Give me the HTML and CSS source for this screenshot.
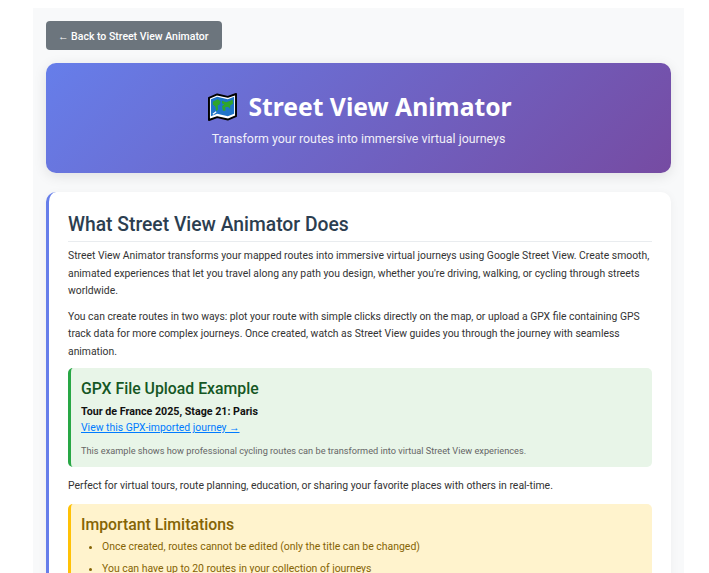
FILE: index.html
```html
<!DOCTYPE html>
<html lang="en">
<head>
<meta charset="utf-8">
<title>Street View Animator</title>
<link rel="stylesheet" href="styles.css">
</head>
<body>
<div class="container">
  <a class="back" href="#">← Back to Street View Animator</a>
  <header class="hero">
    <h1 class="hero-title">
      <svg class="map-icon" viewBox="0 0 30 29" aria-hidden="true">
        <path d="M1 5 L9.5 1.5 L20.5 4 L29 1 V24 L20.5 27.5 L9.5 25 L1 28 Z" fill="#fff" stroke="#000" stroke-width="2" stroke-linejoin="round"/>
        <path d="M3 6.5 L9.5 4 L20.5 6.5 L27 4 V21.5 L20.5 24 L9.5 21.5 L3 24 Z" fill="#1f74c9"/>
        <path d="M5 9 L10 6.5 L13 8.5 L12 12 L10 13 L10.5 17 L8.5 19 L7.5 14 L5 12 Z M14.5 8 L19 9.5 L25.5 7 L26 11 L23 13 L23 16.5 L21 14.5 L18 14.5 L18 18.5 L15.5 18.5 L14.5 13.5 L17 12 L14.5 11 Z" fill="#2fa52c"/>
        <path d="M5 22 L8.5 19.5" stroke="#fff" stroke-width="1.2"/>
      </svg>
      <span>Street View Animator</span>
    </h1>
    <p class="hero-sub">Transform your routes into immersive virtual journeys</p>
  </header>
  <section class="card">
    <h2 class="card-title">What Street View Animator Does</h2>
    <p class="text">Street View Animator transforms your mapped routes into immersive virtual journeys using Google Street View. Create smooth, animated experiences that let you travel along any path you design, whether you're driving, walking, or cycling through streets worldwide.</p>
    <p class="text">You can create routes in two ways: plot your route with simple clicks directly on the map, or upload a GPX file containing GPS track data for more complex journeys. Once created, watch as Street View guides you through the journey with seamless animation.</p>
    <div class="note note-green">
      <h3 class="note-title">GPX File Upload Example</h3>
      <p class="example-name">Tour de France 2025, Stage 21: Paris</p>
      <a class="example-link" href="#">View this GPX-imported journey →</a>
      <p class="example-note">This example shows how professional cycling routes can be transformed into virtual Street View experiences.</p>
    </div>
    <p class="text text-after-note">Perfect for virtual tours, route planning, education, or sharing your favorite places with others in real-time.</p>
    <div class="note note-yellow">
      <h3 class="note-title">Important Limitations</h3>
      <ul class="limits">
        <li>Once created, routes cannot be edited (only the title can be changed)</li>
        <li>You can have up to 20 routes in your collection of journeys</li>
      </ul>
    </div>
  </section>
</div>
</body>
</html>
```
FILE: styles.css
```css
* { box-sizing: border-box; }
html { overflow: hidden; height: 573px; }
body {
  margin: 8px 0 0;
  background: #fff;
  font-family: Roboto, "Noto Sans", sans-serif;
  color: #333;
}
.container {
  width: 651px;
  margin: 0 0 0 33px;
  padding: 13px;
  background: #f8f9fa;
}
.back {
  display: inline-block;
  height: 29px;
  padding: 1px 13.5px 0 12px;
  line-height: 29px;
  background: #6c757d;
  color: #fff;
  font-size: 10.5px;
  font-weight: 500;
  text-decoration: none;
  border-radius: 4px;
  vertical-align: top;
}
.hero {
  margin-top: 13px;
  height: 110px;
  padding-top: 26px;
  border-radius: 10px;
  background: linear-gradient(135deg, #667eea 0%, #764ba2 100%);
  color: #fff;
  text-align: center;
  box-shadow: 0 3px 13px rgba(0, 0, 0, 0.1);
}
.hero-title {
  margin: 0;
  padding-left: 3px;
  display: flex;
  justify-content: center;
  align-items: center;
  gap: 11px;
  font-family: "Noto Sans", Roboto, sans-serif;
  font-size: 24.7px;
  line-height: 36px;
  font-weight: 700;
}
.map-icon { width: 29px; height: 28px; }
.hero-sub {
  margin: 5px 0 0;
  font-size: 12.4px;
  line-height: 18px;
  opacity: 0.9;
}
.card {
  margin-top: 19px;
  padding: 19px;
  background: #fff;
  border-left: 3px solid #667eea;
  border-radius: 10px;
  box-shadow: 0 2px 10px rgba(0, 0, 0, 0.05);
}
.card-title {
  margin: 0 0 5px;
  padding-bottom: 3px;
  border-bottom: 1px solid #e9ecef;
  color: #2c3e50;
  font-size: 19.3px;
  line-height: 27px;
  font-weight: 500;
}
.text {
  margin: 0 0 8px;
  font-size: 10.37px;
  line-height: 17.5px;
  color: #333;
}
.text-after-note { margin-bottom: 9.5px; font-size: 10.45px; }
.note {
  border-radius: 5px;
  padding: 10px 10px 9px;
  margin: 0 0 10px;
}
.note-green { background: #e8f5e8; border-left: 3px solid #28a745; }
.note-yellow { background: #fff3cd; border-left: 3px solid #ffc107; }
.note-title { margin: 0 0 4px; font-size: 15.8px; line-height: 22px; font-weight: 500; }
.note-green .note-title { color: #155724; }
.note-yellow .note-title { color: #856404; }
.example-name { margin: 0; font-size: 10.7px; line-height: 16px; font-weight: 700; color: #111; }
.example-link { font-size: 10.4px; line-height: 16px; color: #007bff; display: block; }
.example-note { margin: 7px 0 0; font-size: 9.2px; line-height: 15px; color: #666; }
.limits { margin: -2px 0 0; padding: 0 0 0 21px; color: #856404; font-size: 10.45px; line-height: 17px; }
.limits li { margin-bottom: 5px; }
```
